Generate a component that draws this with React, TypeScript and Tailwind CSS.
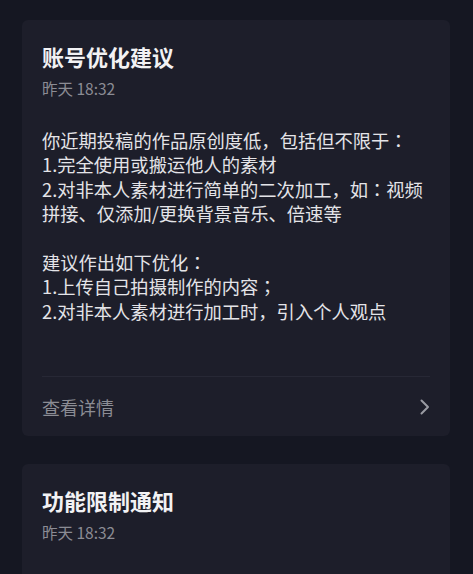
import React from "react";

function Card({ title, time, children, footer }: { title: string; time: string; children?: React.ReactNode; footer?: boolean }) {
  return (
    <div className="mx-[22px] w-[428px] rounded-[6px] bg-[#1d1e2a]">
      <div className="px-[20px] pt-[21px]">
        <div className="text-[22px] leading-[30px] font-bold text-[#f2f2f4]">{title}</div>
        <div className="mt-[7px] text-[15.5px] leading-[20px] text-[#8b8c94]">{time}</div>
        {children}
      </div>
      {footer && (
        <div className="mx-[20px] flex h-[60px] items-center justify-between border-t border-[#272835]">
          <span className="text-[18px] leading-[24px] text-[#8b8c94]">查看详情</span>
          <svg width="12" height="16" viewBox="0 0 12 16" className="mr-[-1px]">
            <path d="M2.5 1.5 L9 8 L2.5 14.5" fill="none" stroke="#9a9ba3" strokeWidth="2" strokeLinecap="round" strokeLinejoin="round" />
          </svg>
        </div>
      )}
    </div>
  );
}

function Line({ text }: { text: string }) {
  const parts = text.split(/([：；])/);
  return (
    <div>
      {parts.map((p, i) =>
        p === "：" || p === "；" ? (
          <span key={i} className="font-['Noto_Sans_CJK_JP',sans-serif]">
            {p}
          </span>
        ) : (
          <React.Fragment key={i}>{p}</React.Fragment>
        )
      )}
    </div>
  );
}

export default function App() {
  const lines = [
    "你近期投稿的作品原创度低，包括但不限于：",
    "1.完全使用或搬运他人的素材",
    "2.对非本人素材进行简单的二次加工，如：视频",
    "拼接、仅添加/更换背景音乐、倍速等",
    "\u00a0",
    "建议作出如下优化：",
    "1.上传自己拍摄制作的内容；",
    "2.对非本人素材进行加工时，引入个人观点",
  ];
  return (
    <div
      className="h-[574px] w-[473px] overflow-hidden bg-[#151722] pt-[20px]"
      style={{ fontFamily: '"Noto Sans CJK SC", "Noto Sans", sans-serif' }}
    >
      <Card title="账号优化建议" time="昨天 18:32" footer>
        <div className="mt-[30px] pb-[53px] text-[18.3px] leading-[24.4px] text-[#e4e4e8] [text-spacing-trim:space-all]">
          {lines.map((l, i) => (
            <Line key={i} text={l} />
          ))}
        </div>
      </Card>
      <div className="h-[28px]" />
      <Card title="功能限制通知" time="昨天 18:32">
        <div className="h-[60px]" />
      </Card>
    </div>
  );
}
